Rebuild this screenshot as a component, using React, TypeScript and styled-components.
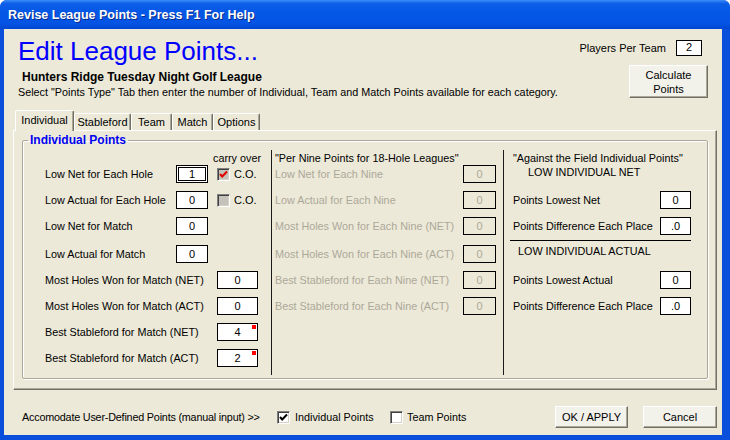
import styled, { createGlobalStyle } from 'styled-components'

const GlobalStyle = createGlobalStyle`
  body {
    margin: 0;
    background: #fff;
    font-family: "Liberation Sans", Arial, sans-serif;
    font-size: 10.8px;
    color: #000;
  }
`

const Window = styled.div`
  width: 730px;
  height: 440px;
  display: flex;
  flex-direction: column;
  background: #0a4fdc;
  border-radius: 7px 7px 0 0;
  overflow: hidden;
`

const TitleBar = styled.div`
  height: 29px;
  flex: 0 0 29px;
  display: flex;
  align-items: center;
  padding-left: 8px;
  color: #fff;
  font-weight: bold;
  font-size: 12.5px;
  text-shadow: 1px 1px 0 #0b2c8c;
  background: linear-gradient(to bottom, #3d8cf8 0%, #0d5fe8 12%, #0558e6 40%, #0454e4 80%, #0347d2 100%);
`

const Body = styled.div`
  flex: 1;
  margin: 0 8px 5px 4px;
  background: #ece9d8;
  display: flex;
  flex-direction: column;
`

const Header = styled.div`
  height: 81px;
  display: flex;
  justify-content: space-between;
`

const HeaderLeft = styled.div`
  padding: 7px 0 0 14px;
`

const Title = styled.h1`
  margin: 0;
  font-size: 26px;
  line-height: 30px;
  font-weight: normal;
  color: #0000ff;
`

const LeagueName = styled.div`
  margin-top: 4px;
  padding-left: 4px;
  font-size: 12px;
  line-height: 14px;
  font-weight: bold;
`

const Hint = styled.div`
  margin-top: 2px;
  line-height: 13px;
`

const HeaderRight = styled.div`
  padding: 11px 14px 0 0;
  display: flex;
  flex-direction: column;
  align-items: flex-end;
`

const PlayersRow = styled.div`
  display: flex;
  align-items: center;
  gap: 10px;
  margin-right: 6px;
  font-size: 11px;
`

const SmallBox = styled.div`
  width: 26px;
  height: 16px;
  box-sizing: border-box;
  border: 1px solid #000;
  background: #fff;
  text-align: center;
  line-height: 13px;
`

const Button = styled.div<{ $w: number; $h: number }>`
  width: ${p => p.$w}px;
  height: ${p => p.$h}px;
  box-sizing: border-box;
  display: flex;
  align-items: center;
  justify-content: center;
  text-align: center;
  font-size: 11px;
  line-height: 14px;
  background: #f2f1ea;
  border: 1px solid;
  border-color: #fff #716f64 #716f64 #fff;
  box-shadow: inset -1px -1px 0 #aca899;
`

const CalcButton = styled(Button)`
  margin-top: 9px;
`

const TabControl = styled.div`
  margin: 0 5px 0 9px;
  display: flex;
  flex-direction: column;
`

const TabStrip = styled.div`
  height: 20px;
  display: flex;
  align-items: flex-end;
  padding-left: 2px;
`

const Tab = styled.div<{ $w: number; $active?: boolean }>`
  width: ${p => p.$w}px;
  height: ${p => (p.$active ? 21 : 17)}px;
  margin-bottom: ${p => (p.$active ? -1 : 0)}px;
  position: relative;
  z-index: ${p => (p.$active ? 1 : 0)};
  box-sizing: border-box;
  display: flex;
  align-items: ${p => (p.$active ? 'flex-start' : 'center')};
  padding-top: ${p => (p.$active ? 3 : 0)}px;
  justify-content: center;
  font-size: 11px;
  background: #ece9d8;
  border: 1px solid #fff;
  border-right-color: #716f64;
  border-bottom: none;
  border-radius: 2px 2px 0 0;
  box-shadow: inset -1px 0 0 #aca899;
`

const Panel = styled.div`
  height: 260px;
  box-sizing: border-box;
  border: 1px solid;
  border-color: #fff #716f64 #716f64 #fff;
  box-shadow: inset -1px -1px 0 #aca899;
  padding: 2px 8px 0 8px;
`

const Group = styled.fieldset`
  margin: 0;
  padding: 0;
  height: 246px;
  box-sizing: border-box;
  border: 1px solid #aca899;
  border-radius: 2px;
  box-shadow: 1px 1px 0 #fff, inset 1px 1px 0 #fff;
`

const Legend = styled.legend`
  margin-left: 5px;
  padding: 0 2px;
  font-size: 12px;
  line-height: 14px;
  font-weight: bold;
  color: #0000f0;
`

const Columns = styled.div`
  margin-top: 3px;
  height: 225px;
  display: flex;
`

const Column = styled.div<{ $w?: number; $pad: number; $divider?: boolean }>`
  ${p => (p.$w ? `width: ${p.$w}px; flex: 0 0 ${p.$w}px;` : 'flex: 1;')}
  box-sizing: border-box;
  padding: 2px 0 0 ${p => p.$pad}px;
  border-left: ${p => (p.$divider ? '1px solid #1a1a1a' : 'none')};
  display: flex;
  flex-direction: column;
`

const Caption = styled.div<{ $indent?: number; $top?: number }>`
  line-height: 13px;
  padding-left: ${p => p.$indent || 0}px;
  margin-top: ${p => p.$top || 0}px;
  white-space: nowrap;
`

const Row = styled.div<{ $top: number }>`
  height: 18px;
  margin-top: ${p => p.$top}px;
  display: flex;
  align-items: center;
`

const Label = styled.div<{ $w: number; $disabled?: boolean }>`
  width: ${p => p.$w}px;
  flex: 0 0 ${p => p.$w}px;
  white-space: nowrap;
  color: ${p => (p.$disabled ? '#aca899' : '#000')};
`

const Field = styled.div<{ $w: number; $disabled?: boolean; $focused?: boolean; $flag?: boolean }>`
  position: relative;
  width: ${p => p.$w}px;
  height: 18px;
  box-sizing: border-box;
  border: 1px solid #000;
  background: ${p => (p.$disabled ? '#ece9d8' : '#fff')};
  color: ${p => (p.$disabled ? '#aca899' : '#000')};
  text-align: center;
  line-height: 16px;
  font-size: 11px;
  ${p => (p.$focused ? 'box-shadow: inset 0 0 0 1px #fff, inset 0 0 0 2px #000;' : '')}
  &::after {
    content: '';
    display: ${p => (p.$flag ? 'block' : 'none')};
    position: absolute;
    top: 1px;
    right: 1px;
    width: 4px;
    height: 4px;
    background: #f00;
  }
`

const Rule = styled.div`
  margin: 5px 0 0 -3px;
  width: 181px;
  height: 1px;
  background: #000;
`

const CheckBox = styled.div<{ $grey?: boolean }>`
  width: 13px;
  height: 13px;
  flex: 0 0 13px;
  box-sizing: border-box;
  border: 1px solid;
  border-color: #808080 #fff #fff #808080;
  box-shadow: inset 1px 1px 0 #404040, inset -1px -1px 0 #d4d0c8;
  background: ${p => (p.$grey ? '#c4c2ba' : '#fff')};
  display: flex;
  align-items: center;
  justify-content: center;
`

const CarryBox = styled(CheckBox)`
  margin-left: 9px;
`

const CO = styled.span`
  margin-left: 4px;
  font-size: 11px;
`

const Footer = styled.div`
  margin-top: 16px;
  height: 22px;
  display: flex;
  align-items: center;
  padding: 0 5px 0 18px;
`

const FooterText = styled.div`
  width: 255px;
  white-space: nowrap;
  letter-spacing: -0.2px;
`

const CheckItem = styled.div<{ $w?: number; $gap: number }>`
  ${p => (p.$w ? `width: ${p.$w}px;` : '')}
  display: flex;
  align-items: center;
  gap: ${p => p.$gap}px;
  white-space: nowrap;
`

const Spacer = styled.div`
  flex: 1;
`

const ButtonGap = styled.div`
  width: 15px;
`

const Tick = ({ color }: { color: string }) => (
  <svg width="9" height="9" viewBox="0 0 9 9">
    <polyline points="1,4 3.2,6.5 8,1.5" fill="none" stroke={color} strokeWidth="2" />
  </svg>
)

type Entry = { label: string; value: string; flag?: boolean; focused?: boolean }

const leftRows: (Entry & { wide: boolean; top: number; carry?: 'on' | 'off' })[] = [
  { label: 'Low Net for Each Hole', value: '1', wide: false, top: 0, carry: 'on', focused: true },
  { label: 'Low Actual for Each Hole', value: '0', wide: false, top: 8, carry: 'off' },
  { label: 'Low Net for Match', value: '0', wide: false, top: 8 },
  { label: 'Low Actual for Match', value: '0', wide: false, top: 10 },
  { label: 'Most Holes Won for Match (NET)', value: '0', wide: true, top: 8 },
  { label: 'Most Holes Won for Match (ACT)', value: '0', wide: true, top: 8 },
  { label: 'Best Stableford for Match (NET)', value: '4', wide: true, top: 8, flag: true },
  { label: 'Best Stableford for Match (ACT)', value: '2', wide: true, top: 8, flag: true },
]

const nineRows = [
  { label: 'Low Net for Each Nine', top: 0 },
  { label: 'Low Actual for Each Nine', top: 8 },
  { label: 'Most Holes Won for Each Nine (NET)', top: 8 },
  { label: 'Most Holes Won for Each Nine (ACT)', top: 10 },
  { label: 'Best Stableford for Each Nine (NET)', top: 8 },
  { label: 'Best Stableford for Each Nine (ACT)', top: 8 },
]

const tabs = [
  { name: 'Individual', w: 59 },
  { name: 'Stableford', w: 57 },
  { name: 'Team', w: 41 },
  { name: 'Match', w: 41 },
  { name: 'Options', w: 47 },
]

const App = () => {
  return (
    <>
      <GlobalStyle />
      <Window>
        <TitleBar>Revise League Points - Press F1 For Help</TitleBar>
        <Body>
          <Header>
            <HeaderLeft>
              <Title>Edit League Points...</Title>
              <LeagueName>Hunters Ridge Tuesday Night Golf League</LeagueName>
              <Hint>
                Select "Points Type" Tab then enter the number of Individual, Team and Match Points available for each category.
              </Hint>
            </HeaderLeft>
            <HeaderRight>
              <PlayersRow>
                Players Per Team
                <SmallBox>2</SmallBox>
              </PlayersRow>
              <CalcButton $w={79} $h={33}>
                Calculate
                <br />
                Points
              </CalcButton>
            </HeaderRight>
          </Header>

          <TabControl>
            <TabStrip>
              {tabs.map((t, i) => (
                <Tab key={t.name} $w={t.w} $active={i === 0}>
                  {t.name}
                </Tab>
              ))}
            </TabStrip>
            <Panel>
              <Group>
                <Legend>Individual Points</Legend>
                <Columns>
                  <Column $w={248} $pad={22}>
                    <Caption $indent={168}>carry over</Caption>
                    {leftRows.map(r => (
                      <Row key={r.label} $top={r.top}>
                        <Label $w={r.wide ? 172 : 131}>{r.label}</Label>
                        <Field $w={r.wide ? 41 : 32} $flag={r.flag} $focused={r.focused}>
                          {r.value}
                        </Field>
                        {r.carry && (
                          <>
                            <CarryBox $grey>{r.carry === 'on' && <Tick color="#e00000" />}</CarryBox>
                            <CO>C.O.</CO>
                          </>
                        )}
                      </Row>
                    ))}
                  </Column>

                  <Column $w={232} $pad={3} $divider>
                    <Caption>"Per Nine Points for 18-Hole Leagues"</Caption>
                    {nineRows.map(r => (
                      <Row key={r.label} $top={r.top}>
                        <Label $w={188} $disabled>
                          {r.label}
                        </Label>
                        <Field $w={33} $disabled>
                          0
                        </Field>
                      </Row>
                    ))}
                  </Column>

                  <Column $pad={9} $divider>
                    <Caption>"Against the Field Individual Points"</Caption>
                    <Caption $indent={15} $top={1}>LOW INDIVIDUAL NET</Caption>
                    <Row $top={12}>
                      <Label $w={147}>Points Lowest Net</Label>
                      <Field $w={31}>0</Field>
                    </Row>
                    <Row $top={8}>
                      <Label $w={147}>Points Difference Each Place</Label>
                      <Field $w={31}>.0</Field>
                    </Row>
                    <Rule />
                    <Caption $indent={5} $top={4}>LOW INDIVIDUAL ACTUAL</Caption>
                    <Row $top={13}>
                      <Label $w={147}>Points Lowest Actual</Label>
                      <Field $w={31}>0</Field>
                    </Row>
                    <Row $top={8}>
                      <Label $w={147}>Points Difference Each Place</Label>
                      <Field $w={31}>.0</Field>
                    </Row>
                  </Column>
                </Columns>
              </Group>
            </Panel>
          </TabControl>

          <Footer>
            <FooterText>Accomodate User-Defined Points (manual input) &gt;&gt;</FooterText>
            <CheckItem $w={113} $gap={5}>
              <CheckBox>
                <Tick color="#000" />
              </CheckBox>
              Individual Points
            </CheckItem>
            <CheckItem $gap={4}>
              <CheckBox />
              Team Points
            </CheckItem>
            <Spacer />
            <Button $w={73} $h={22}>OK / APPLY</Button>
            <ButtonGap />
            <Button $w={74} $h={22}>Cancel</Button>
          </Footer>
        </Body>
      </Window>
    </>
  )
}

export default App
